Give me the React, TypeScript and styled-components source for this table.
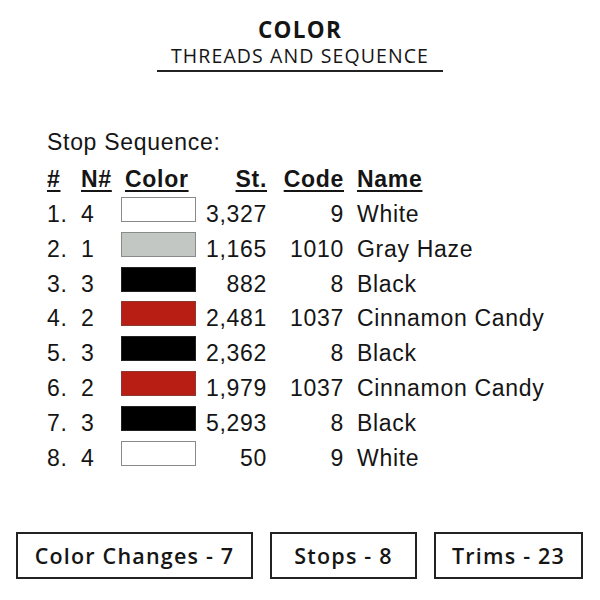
import React from "react";
import styled, { createGlobalStyle } from "styled-components";

const Global = createGlobalStyle`
  html, body { margin: 0; padding: 0; background: #fff; }
  body { font-family: "Liberation Sans", Arial, sans-serif; color: #111; }
`;

const Page = styled.div`
  width: 600px;
  height: 600px;
  display: flex;
  flex-direction: column;
  box-sizing: border-box;
`;

const Header = styled.header`
  display: flex;
  flex-direction: column;
  align-items: center;
  padding-top: 17px;
  font-family: "Open Sans", sans-serif;
`;

const Title = styled.h1`
  margin: 0;
  font-size: 22.5px;
  line-height: 26px;
  font-weight: 700;
  letter-spacing: 1.3px;
  color: #151515;
`;

const Subtitle = styled.div`
  margin-top: 1px;
  width: 286px;
  text-align: center;
  font-size: 19.5px;
  line-height: 24px;
  font-weight: 500;
  letter-spacing: 1.1px;
  color: #151515;
  padding-bottom: 2px;
  border-bottom: 2px solid #222;
`;

const Section = styled.section`
  padding: 57px 0 0 47px;
  letter-spacing: 0.7px;
`;

const Caption = styled.div`
  font-size: 23px;
  line-height: 26px;
  color: #151515;
  margin-bottom: 7px;
`;

const Grid = styled.div`
  display: grid;
  grid-template-columns: 34px 40px 75px 71px 77px auto;
  grid-auto-rows: 34.86px;
  align-items: center;
  font-size: 23px;
  color: #151515;
`;

const Head = styled.div<{ $right?: boolean; $pad?: number }>`
  font-weight: 700;
  text-decoration: underline;
  text-decoration-thickness: 2px;
  text-underline-offset: 3px;
  text-align: ${(p) => (p.$right ? "right" : "left")};
  padding-left: ${(p) => p.$pad ?? 0}px;
  white-space: nowrap;
`;

const Cell = styled.div<{ $right?: boolean; $pad?: number }>`
  text-align: ${(p) => (p.$right ? "right" : "left")};
  padding-left: ${(p) => p.$pad ?? 0}px;
  white-space: nowrap;
`;

const Swatch = styled.div<{ $color: string; $border: string }>`
  width: 75px;
  height: 25px;
  box-sizing: border-box;
  background: ${(p) => p.$color};
  border: 1.5px solid ${(p) => p.$border};
  margin-top: -10px;
`;

const Footer = styled.div`
  margin-top: auto;
  margin-bottom: 21px;
  padding: 0 17px 0 16px;
  display: flex;
  gap: 17px;
  font-family: "Open Sans", sans-serif;
`;

const StatBox = styled.div<{ $w: number }>`
  width: ${(p) => p.$w}px;
  height: 47px;
  box-sizing: border-box;
  border: 2px solid #222;
  display: flex;
  align-items: center;
  justify-content: center;
  font-size: 21.5px;
  font-weight: 600;
  letter-spacing: 1.2px;
  color: #151515;
  white-space: nowrap;
`;

type Row = { n: number; color: string; border: string; st: string; code: string; name: string };

const rows: Row[] = [
  { n: 4, color: "#ffffff", border: "#8a8a8a", st: "3,327", code: "9", name: "White" },
  { n: 1, color: "#c3c7c3", border: "#8a8a8a", st: "1,165", code: "1010", name: "Gray Haze" },
  { n: 3, color: "#000000", border: "#222", st: "882", code: "8", name: "Black" },
  { n: 2, color: "#b81e14", border: "#8a3a30", st: "2,481", code: "1037", name: "Cinnamon Candy" },
  { n: 3, color: "#000000", border: "#222", st: "2,362", code: "8", name: "Black" },
  { n: 2, color: "#b81e14", border: "#8a3a30", st: "1,979", code: "1037", name: "Cinnamon Candy" },
  { n: 3, color: "#000000", border: "#222", st: "5,293", code: "8", name: "Black" },
  { n: 4, color: "#ffffff", border: "#8a8a8a", st: "50", code: "9", name: "White" },
];

export default function App() {
  return (
    <Page>
      <Global />
      <Header>
        <Title>COLOR</Title>
        <Subtitle>THREADS AND SEQUENCE</Subtitle>
      </Header>
      <Section>
        <Caption>Stop Sequence:</Caption>
        <Grid>
          <Head>#</Head>
          <Head>N#</Head>
          <Head $pad={4}>Color</Head>
          <Head $right>St.</Head>
          <Head $right>Code</Head>
          <Head $pad={13}>Name</Head>
          {rows.map((r, i) => (
            <React.Fragment key={i}>
              <Cell>{i + 1}.</Cell>
              <Cell>{r.n}</Cell>
              <Swatch $color={r.color} $border={r.border} />
              <Cell $right>{r.st}</Cell>
              <Cell $right>{r.code}</Cell>
              <Cell $pad={13}>{r.name}</Cell>
            </React.Fragment>
          ))}
        </Grid>
      </Section>
      <Footer>
        <StatBox $w={237}>Color Changes - 7</StatBox>
        <StatBox $w={147}>Stops - 8</StatBox>
        <StatBox $w={149}>Trims - 23</StatBox>
      </Footer>
    </Page>
  );
}
